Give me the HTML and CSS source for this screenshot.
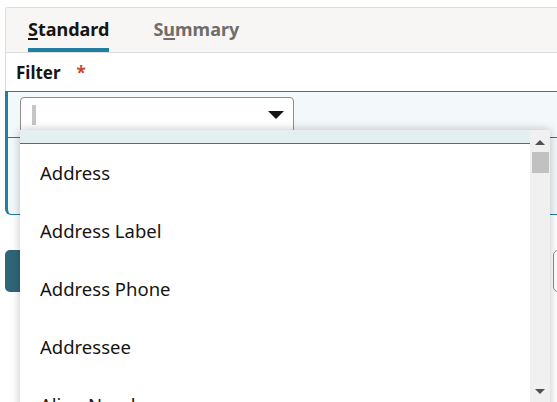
FILE: index.html
```html
<!DOCTYPE html>
<html>
<head>
<meta charset="utf-8">
<link rel="stylesheet" href="styles.css">
</head>
<body>
<div class="frame">
  <div class="head">
    <div class="tabs">
      <div class="tab active"><u>S</u>tandard</div>
      <div class="tab">S<u>u</u>mmary</div>
    </div>
    <div class="label-row">
      <span class="label">Filter</span>
      <span class="req">*</span>
    </div>
  </div>
  <div class="panel">
    <div class="panel-row first">
      <div class="select">
        <span class="cursor"></span>
        <svg class="caret" width="16" height="8" viewBox="0 0 16 8"><path d="M0 0H16L8 8Z" fill="#161513"/></svg>
      </div>
    </div>
    <div class="panel-row second">
      <div class="field-box"></div>
    </div>
  </div>
  <div class="actions">
    <div class="btn-primary"></div>
    <div class="btn-outline"></div>
  </div>
</div>

<div class="popup">
  <div class="list">
    <div class="band"></div>
    <div class="item">Address</div>
    <div class="item">Address Label</div>
    <div class="item">Address Phone</div>
    <div class="item">Addressee</div>
    <div class="item">Alien Number</div>
  </div>
  <div class="scrollbar">
    <svg class="arrow-up" width="10" height="5" viewBox="0 0 10 5"><path d="M0 5H10L5 0Z" fill="#505050"/></svg>
    <div class="thumb"></div>
    <svg class="arrow-down" width="10" height="5" viewBox="0 0 10 5"><path d="M0 0H10L5 5Z" fill="#505050"/></svg>
  </div>
</div>
</body>
</html>
```

FILE: styles.css
```css
html, body {
  margin: 0;
  padding: 0;
  background: #ffffff;
  overflow: hidden;
  width: 557px;
  height: 402px;
  font-family: "Noto Sans", "Open Sans", sans-serif;
  color: #161513;
}

.frame {
  margin-top: 7px;
  margin-left: 5px;
  width: 600px;
  height: 400px;
}

.head {
  border-top: 1px solid #dedddb;
  border-left: 1px solid #dedddb;
  border-top-left-radius: 3px;
}

.tabs {
  height: 44px;
  background: #f7f6f4;
  border-bottom: 1px solid #dedddb;
  display: flex;
  padding-left: 22px;
  gap: 44px;
}

.tab {
  font-size: 18px;
  font-weight: 700;
  color: #6f6c69;
  line-height: 24px;
  padding-top: 9px;
  height: 35px;
  box-sizing: content-box;
}

.tab u {
  text-decoration-thickness: 2px;
  text-underline-offset: 2px;
}

.tab.active {
  color: #161513;
  box-shadow: inset 0 -4px 0 #227e9e;
}

.label-row {
  height: 38px;
  display: flex;
  align-items: center;
  padding-left: 10px;
  gap: 16px;
}

.label {
  font-size: 17px;
  font-weight: 700;
  color: #161513;
}

.req {
  color: #c74634;
  font-size: 17px;
  font-weight: 700;
}

.panel {
  border-left: 3px solid #227e9e;
  border-top: 1px solid #227e9e;
  border-bottom: 1px solid #227e9e;
  border-bottom-left-radius: 6px;
  background: #f3f8fb;
  height: 122px;
  display: flex;
  flex-direction: column;
}

.panel-row.first {
  height: 46px;
  border-bottom: 1px solid #227e9e;
  padding-left: 12px;
  padding-top: 5px;
  box-sizing: border-box;
}

.select {
  width: 274px;
  height: 36px;
  box-sizing: border-box;
  border: 1px solid #8f8c89;
  border-radius: 4px;
  background: #ffffff;
  display: flex;
  align-items: center;
  justify-content: space-between;
  padding: 0 9px 0 11px;
}

.cursor {
  width: 4px;
  height: 20px;
  background: #c6c6c6;
}

.caret {
  display: block;
}

.panel-row.second {
  flex: 1;
  display: flex;
  align-items: center;
  justify-content: flex-end;
}

.field-box {
  width: 60px;
  height: 42px;
  margin-right: -52px;
  border: 1px solid #b9b7b4;
  border-radius: 5px;
  background: #ffffff;
}

.actions {
  margin-top: 35px;
  display: flex;
  justify-content: space-between;
  height: 42px;
}

.btn-primary {
  width: 120px;
  height: 42px;
  background: #2f6679;
  border-radius: 5px;
}

.btn-outline {
  width: 60px;
  height: 42px;
  box-sizing: border-box;
  border: 1px solid #8f8c89;
  border-radius: 5px;
  margin-right: -8px;
}

.popup {
  position: absolute;
  left: 20px;
  top: 130px;
  width: 530px;
  height: 290px;
  background: #ffffff;
  box-shadow: 0 0 9px rgba(0, 0, 0, 0.24);
  display: flex;
}

.list {
  flex: 1;
  overflow: hidden;
}

.band {
  height: 13px;
  background: #e4eff1;
  border-bottom: 1px solid #227e9e;
}

.item {
  height: 58px;
  line-height: 58px;
  padding-left: 20px;
  font-size: 18.5px;
  color: #161513;
}

.scrollbar {
  width: 20px;
  background: #f0f0f0;
  display: flex;
  flex-direction: column;
  align-items: center;
  position: relative;
}

.arrow-up {
  margin-top: 10px;
  display: block;
}

.thumb {
  width: 17px;
  height: 21px;
  background: #c1c1c1;
  margin-top: 7px;
}

.arrow-down {
  position: absolute;
  top: 259px;
  left: 5px;
  display: block;
}
```
